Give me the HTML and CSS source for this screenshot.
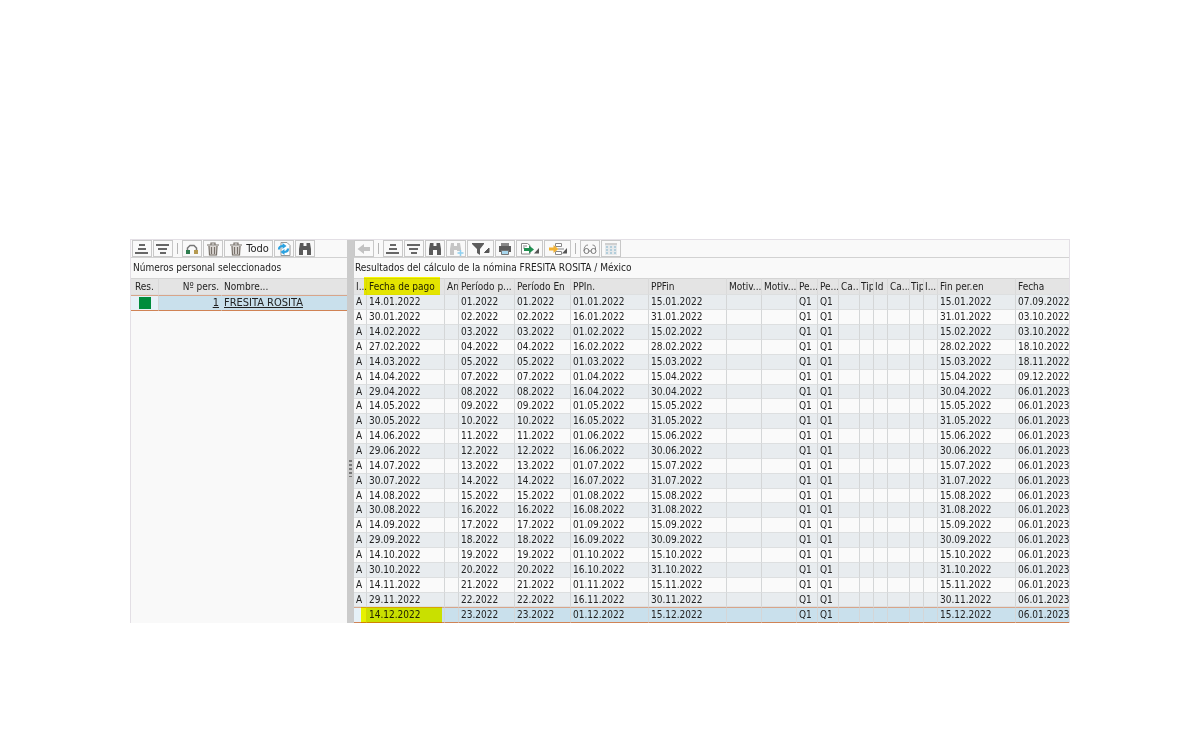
FILE: index.html
```html
<!DOCTYPE html>
<html lang="es">
<head>
<meta charset="utf-8">
<title>Resultados del cálculo de la nómina</title>
<link rel="stylesheet" href="styles.css">
</head>
<body>
<svg class="defs" aria-hidden="true">
  <symbol id="asc" viewBox="0 0 16 14"><path d="M5 3h6M4 7h8M1 11h13" stroke="#666" stroke-width="2"/></symbol>
  <symbol id="desc" viewBox="0 0 16 14"><path d="M1 3h13M3 7h9M5 11h6" stroke="#666" stroke-width="2"/></symbol>
  <symbol id="layout" viewBox="0 0 16 14"><path d="M3.500 9V6L6 3.500h4L12.500 6v3" fill="none" stroke="#777" stroke-width="1.500"/><path d="M2 8h4v4H2z" fill="#2e7d4f"/><path d="M10 8h4v4h-4z" fill="#b59a50"/></symbol>
  <symbol id="trash" viewBox="0 0 16 14"><path d="M3.500 4h9l-1 9.500h-7z" fill="#dcd8d4"/><path d="M2 3h12M6 2.500V1h4v1.500M4 4l.5 9h7l.5-9M6.500 5v7M9.500 5v7" fill="none" stroke="#777069" stroke-width="1.200"/></symbol>
  <symbol id="refresh" viewBox="0 0 16 14"><path d="M5 .5h6l3 3v10H5z" fill="#fff" stroke="#999"/><path d="M3 7.500Q3 4 7 4M12 6.500Q12 10 8 10" fill="none" stroke="#2ca2e0" stroke-width="2.200"/><path d="M6.500 1l4 3-4 3zM8.500 7v6l-4-3z" fill="#2ca2e0"/></symbol>
  <symbol id="find" viewBox="0 0 16 14"><path d="M3 1h3.500v3h3V1H13l1 6v6h-4V8H6v5H2V7z" fill="#5a5a5a"/></symbol>
  <symbol id="findnext" viewBox="0 0 16 14"><path d="M3 1h3v3h3V1h3l1 6v2H9V8H6v5H2V7z" fill="#c5c5c5"/><path d="M12.500 8v6M9.500 11h6" stroke="#8fd0f0" stroke-width="1.500"/></symbol>
  <symbol id="back" viewBox="0 0 16 14"><path d="M1.500 7L8 2v3h6v4H8v3z" fill="#c2c2c2"/></symbol>
  <symbol id="filter" viewBox="0 0 20 14"><path d="M1 1h12v1L9 7v6l-3-2V7L1 2z" fill="#5c5c5c"/><path d="M18 6v4.500h-4.500z" fill="#555" stroke="#555"/></symbol>
  <symbol id="print" viewBox="0 0 16 14"><path d="M4 1h8v3H4z" fill="#888"/><path d="M2 4h12v6H2z" fill="#5c5c5c"/><path d="M4.500 8.500h7v4h-7z" fill="#a8d7ee" stroke="#777"/></symbol>
  <symbol id="export" viewBox="0 0 20 14"><path d="M1.500 1.500h6l2.500 2V12H1.500zM3 4h4M3 6h2" fill="#fff" stroke="#888"/><path d="M4 6h5V3.500l5 4-5 4V9H4z" fill="#1f8f50"/><path d="M19 6v5.500h-5z" fill="#555"/></symbol>
  <symbol id="config" viewBox="0 0 20 14"><path d="M7.500 1.500h6v3h-6zM7.500 9.500h6v3h-6zM10 7h6" fill="#fff" stroke="#888"/><path d="M1 5.500h4.500V3l5 4-5 4V8.500H1z" fill="#f2b233"/><path d="M19 6v5.500h-5z" fill="#555"/></symbol>
  <symbol id="glasses" viewBox="0 0 16 14"><path d="M2 9Q2 3 6 3M13.500 8Q14 3 10.500 3M6.500 9h3" fill="none" stroke="#888"/><circle cx="4.500" cy="9" r="2.500" fill="none" stroke="#777"/><circle cx="11.500" cy="9" r="2.500" fill="none" stroke="#777"/></symbol>
  <symbol id="gridicon" viewBox="0 0 16 14"><path d="M2 1h12v12H2z" fill="#e6e9eb"/><path d="M4 4v9M8 4v9M12 4v9" stroke="#b3cedb" stroke-width="2" stroke-dasharray="2 1"/><path d="M2 2h12" stroke="#d0d0d0" stroke-width="2"/></symbol>
</svg>
<main class="frame">
  <section class="panel people">
    <div class="toolbar">
      <button class="tool" aria-label="Orden ascendente"><svg class="icon"><use href="#asc"/></svg></button>
      <button class="tool" aria-label="Orden descendente"><svg class="icon"><use href="#desc"/></svg></button>
      <span class="sep"></span>
      <button class="tool" aria-label="Disposición"><svg class="icon"><use href="#layout"/></svg></button>
      <button class="tool" aria-label="Borrar"><svg class="icon"><use href="#trash"/></svg></button>
      <button class="tool labelled"><svg class="icon"><use href="#trash"/></svg>Todo</button>
      <button class="tool" aria-label="Actualizar"><svg class="icon"><use href="#refresh"/></svg></button>
      <button class="tool" aria-label="Buscar"><svg class="icon"><use href="#find"/></svg></button>
    </div>
    <h2 class="title">Números personal seleccionados</h2>
    <table class="grid">
      <colgroup><col class="w-res"><col class="w-num"><col></colgroup>
      <thead><tr><th>Res.</th><th class="right">Nº pers.</th><th>Nombre...</th></tr></thead>
      <tbody><tr class="selected"><td class="status"><span class="square"></span></td><td class="right"><a class="link" href="#p1">1</a></td><td><a class="link" href="#p1">FRESITA ROSITA</a></td></tr></tbody>
    </table>
  </section>
  <div class="splitter"><span class="grip"></span></div>
  <section class="panel results">
    <div class="toolbar">
      <button class="tool" aria-label="Atrás"><svg class="icon"><use href="#back"/></svg></button>
      <span class="sep"></span>
      <button class="tool" aria-label="Orden ascendente"><svg class="icon"><use href="#asc"/></svg></button>
      <button class="tool" aria-label="Orden descendente"><svg class="icon"><use href="#desc"/></svg></button>
      <button class="tool" aria-label="Buscar"><svg class="icon"><use href="#find"/></svg></button>
      <button class="tool" aria-label="Buscar siguiente"><svg class="icon"><use href="#findnext"/></svg></button>
      <button class="tool wide" aria-label="Filtro"><svg class="icon"><use href="#filter"/></svg></button>
      <button class="tool" aria-label="Imprimir"><svg class="icon"><use href="#print"/></svg></button>
      <button class="tool wide" aria-label="Exportar"><svg class="icon"><use href="#export"/></svg></button>
      <button class="tool wide" aria-label="Configurar"><svg class="icon"><use href="#config"/></svg></button>
      <span class="sep"></span>
      <button class="tool" aria-label="Visualizar"><svg class="icon"><use href="#glasses"/></svg></button>
      <button class="tool" aria-label="Tabla"><svg class="icon"><use href="#gridicon"/></svg></button>
    </div>
    <h2 class="title">Resultados del cálculo de la nómina FRESITA ROSITA / México</h2>
    <table class="grid striped">
      <colgroup><col class="w-13"><col class="w-78"><col class="w-14"><col class="w-56"><col class="w-56"><col class="w-78"><col class="w-78"><col class="w-35"><col class="w-35"><col class="w-21"><col class="w-21"><col class="w-21"><col class="w-14"><col class="w-14"><col class="w-22"><col class="w-14"><col class="w-14"><col class="w-78"><col></colgroup>
      <thead><tr><th>I...</th><th class="marked"><span class="text">Fecha de pago</span></th><th>An</th><th>Período p...</th><th>Período En</th><th>PPIn.</th><th>PPFin</th><th>Motiv...</th><th>Motiv...</th><th>Pe...</th><th>Pe...</th><th>Ca...</th><th class="tight">Tip</th><th class="tight">Id</th><th>Ca...</th><th class="tight">Tip</th><th class="tight">I...</th><th>Fin per.en</th><th>Fecha</th></tr></thead>
      <tbody id="rows"></tbody>
    </table>
  </section>
</main>
<script src="rows.js"></script>
</body>
</html>
```
FILE: rows.js
```js
// [indicator, payment date, period, period start, period end, run date]
const runs = [
  ["A", "14.01.2022", "01.2022", "01.01.2022", "15.01.2022", "07.09.2022"],
  ["A", "30.01.2022", "02.2022", "16.01.2022", "31.01.2022", "03.10.2022"],
  ["A", "14.02.2022", "03.2022", "01.02.2022", "15.02.2022", "03.10.2022"],
  ["A", "27.02.2022", "04.2022", "16.02.2022", "28.02.2022", "18.10.2022"],
  ["A", "14.03.2022", "05.2022", "01.03.2022", "15.03.2022", "18.11.2022"],
  ["A", "14.04.2022", "07.2022", "01.04.2022", "15.04.2022", "09.12.2022"],
  ["A", "29.04.2022", "08.2022", "16.04.2022", "30.04.2022", "06.01.2023"],
  ["A", "14.05.2022", "09.2022", "01.05.2022", "15.05.2022", "06.01.2023"],
  ["A", "30.05.2022", "10.2022", "16.05.2022", "31.05.2022", "06.01.2023"],
  ["A", "14.06.2022", "11.2022", "01.06.2022", "15.06.2022", "06.01.2023"],
  ["A", "29.06.2022", "12.2022", "16.06.2022", "30.06.2022", "06.01.2023"],
  ["A", "14.07.2022", "13.2022", "01.07.2022", "15.07.2022", "06.01.2023"],
  ["A", "30.07.2022", "14.2022", "16.07.2022", "31.07.2022", "06.01.2023"],
  ["A", "14.08.2022", "15.2022", "01.08.2022", "15.08.2022", "06.01.2023"],
  ["A", "30.08.2022", "16.2022", "16.08.2022", "31.08.2022", "06.01.2023"],
  ["A", "14.09.2022", "17.2022", "01.09.2022", "15.09.2022", "06.01.2023"],
  ["A", "29.09.2022", "18.2022", "16.09.2022", "30.09.2022", "06.01.2023"],
  ["A", "14.10.2022", "19.2022", "01.10.2022", "15.10.2022", "06.01.2023"],
  ["A", "30.10.2022", "20.2022", "16.10.2022", "31.10.2022", "06.01.2023"],
  ["A", "14.11.2022", "21.2022", "01.11.2022", "15.11.2022", "06.01.2023"],
  ["A", "29.11.2022", "22.2022", "16.11.2022", "30.11.2022", "06.01.2023"],
  ["", "14.12.2022", "23.2022", "01.12.2022", "15.12.2022", "06.01.2023"]
];
document.getElementById("rows").innerHTML = runs.map((r, i) => {
  const last = i === runs.length - 1;
  const cells = [r[0], r[1], "", r[2], r[2], r[3], r[4], "", "", "Q1", "Q1", "", "", "", "", "", "", r[4], r[5]];
  return `<tr${last ? ' class="selected"' : ""}>` + cells.map((c, j) =>
    last && j === 1 ? `<td class="marked"><span class="text">${c}</span></td>` :
    last && j === 0 ? '<td class="status"></td>' : `<td>${c}</td>`).join("") + "</tr>";
}).join("");
```
FILE: styles.css
```css
* { box-sizing: border-box; }
body {
  margin: 0;
  padding: 239px 130px 126px;
  background: #fff;
  color: #222;
  font: 10px/14px "DejaVu Sans Condensed", "Noto Sans", sans-serif;
}
.defs { position: absolute; width: 0; height: 0; }
.frame {
  display: flex;
  border: 1px solid #e3dfe5;
  border-bottom: 0;
  background: #f9f9f9;
}
.panel { min-width: 0; overflow: hidden; }
.people { flex: 0 0 216px; }
.results { flex: 1; }
.toolbar {
  display: flex;
  align-items: center;
  gap: 1px;
  height: 18px;
  padding-left: 1px;
  border-bottom: 1px solid #d2d2d2;
}
.results .toolbar { padding-left: 0; }
.tool {
  display: flex;
  align-items: center;
  justify-content: center;
  flex: 0 0 20px;
  height: 17px;
  padding: 0;
  border: 1px solid #c8c8c8;
  background: #f9f9f9;
  color: #222;
  font: inherit;
}
.wide { flex-basis: 27px; }
.labelled { flex-basis: 49px; gap: 2px; font-size: 11px; }
.icon { flex: none; width: 16px; height: 14px; }
.wide .icon { width: 20px; }
.sep { flex: 0 0 1px; height: 11px; margin: 0 3px; background: #b5b5b5; }
.title {
  margin: 0;
  padding: 2px 2px 3px;
  height: 20px;
  font: inherit;
  line-height: 15px;
  white-space: nowrap;
}
.results .title { padding-left: 1px; }
.grid {
  width: 100%;
  table-layout: fixed;
  border-collapse: separate;
  border-spacing: 0;
}
.grid th, .grid td {
  position: relative;
  height: 15px;
  padding: 0 0 0 2px;
  overflow: hidden;
  border-right: 1px solid #d4d6d7;
  border-bottom: 1px solid #dddfe0;
  font-weight: normal;
  text-align: left;
  white-space: nowrap;
  line-height: 14px;
}
.grid th {
  height: 17px;
  padding-top: 1px;
  background: #e4e4e4;
  border-top: 1px solid #d4d4d4;
  border-right-color: #dadada;
}
.grid .tight { padding-left: 1px; }
.people th:first-child { padding-left: 4px; }
.people td:last-child, .people th:last-child, .results td:last-child, .results th:last-child { border-right: 0; }
.striped tr:nth-child(odd) td { background: #e8ecef; }
.striped td { background: #fafafa; }
.striped tr:nth-child(7n) td { height: 14px; line-height: 13px; }
.grid .right { padding-right: 2px; text-align: right; border-right-color: transparent; }
.grid .selected td {
  height: 16px;
  background: #c9e0ec;
  border-top: 1px solid #d8a58a;
  border-bottom: 1px solid #d08355;
}
.grid .selected .status { background: #e6f1f8; }
.square { display: block; width: 12px; height: 12px; margin-left: 6px; background: #008c3c; }
.link { color: #222; font-size: 11px; }
.grid .marked { overflow: visible; }
.marked::after {
  content: "";
  position: absolute;
  z-index: 1;
  inset: -2px 4px -1px -3px;
  background: #ff0;
  mix-blend-mode: multiply;
}
td.marked::after { inset: -1px 2px -1px -6px; }
.splitter {
  display: flex;
  align-items: center;
  justify-content: center;
  flex: 0 0 7px;
  padding-top: 74px;
  background: #cbcbcb;
}
.grip { width: 3px; height: 17px; background: repeating-linear-gradient(#777 0 2px, #cbcbcb 2px 4px); }
.w-res { width: 28px; }
.w-num { width: 63px; }
.w-13 { width: 13px; }
.w-14 { width: 14px; }
.w-21 { width: 21px; }
.w-22 { width: 22px; }
.w-35 { width: 35px; }
.w-56 { width: 56px; }
.w-78 { width: 78px; }
```
